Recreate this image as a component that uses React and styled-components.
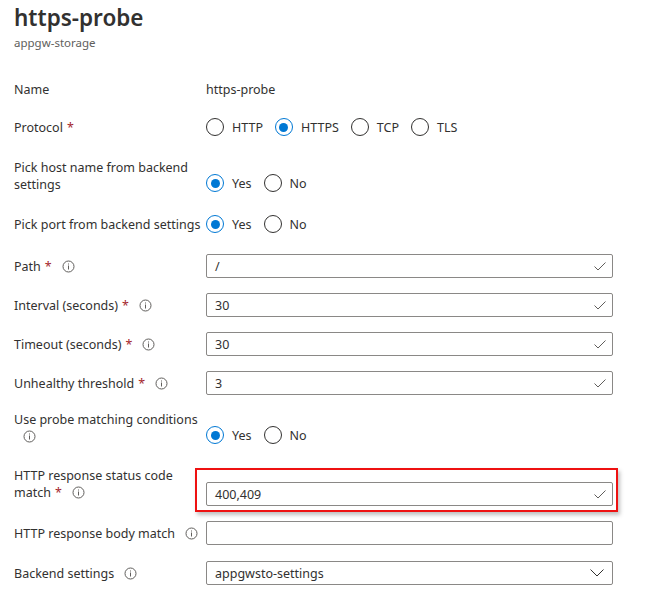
import React from "react";
import styled, { createGlobalStyle } from "styled-components";

const GlobalStyle = createGlobalStyle`
  body {
    margin: 0;
    background: #fff;
    font-family: "Noto Sans", "Open Sans", sans-serif;
    color: #323130;
  }
`;

const Page = styled.div`
  padding: 4px 14px 0 14px;
`;

const Title = styled.h1`
  margin: 0;
  font-size: 22.5px;
  line-height: 28px;
  font-weight: 600;
  color: #323130;
`;

const Subtitle = styled.div`
  margin-top: 3px;
  font-size: 11.5px;
  line-height: 16px;
  color: #605e5c;
`;

const Form = styled.div`
  display: flex;
  flex-direction: column;
  margin-top: 26px;
`;

const Row = styled.div`
  display: grid;
  grid-template-columns: 192px 407px;
  align-items: ${(p) => (p.$end ? "end" : "center")};
  min-height: 24px;
  margin-top: ${(p) => p.$top || 0}px;
`;

const Label = styled.div`
  font-size: 12.5px;
  line-height: 17px;
  white-space: nowrap;
  color: #323130;
  margin-bottom: ${(p) => p.$drop || 0}px;
`;

const Required = styled.span`
  color: #a4262c;
  margin-left: 4px;
`;

const InfoWrap = styled.span`
  display: inline-block;
  margin-left: ${(p) => (p.$wrap ? 9 : 10)}px;
  vertical-align: -2px;
  width: 13px;
  height: 13px;
`;

const Value = styled.div`
  font-size: 12.5px;
  line-height: 17px;
`;

const RadioGroup = styled.div`
  display: flex;
  align-items: center;
  gap: 12px;
  height: 20px;
`;

const RadioItem = styled.label`
  display: flex;
  align-items: center;
  gap: 8px;
  font-size: 12.5px;
  color: #323130;
`;

const Circle = styled.span`
  box-sizing: border-box;
  width: 18px;
  height: 18px;
  border-radius: 50%;
  border: 1px solid ${(p) => (p.$on ? "#0078d4" : "#323130")};
  display: flex;
  align-items: center;
  justify-content: center;
  &::after {
    content: "";
    width: 9px;
    height: 9px;
    border-radius: 50%;
    background: ${(p) => (p.$on ? "#0078d4" : "transparent")};
  }
`;

const Field = styled.div`
  position: relative;
  box-sizing: border-box;
  height: 24px;
  border: 1px solid #8a8886;
  border-radius: 2px;
  display: flex;
  align-items: center;
  justify-content: space-between;
  padding: 0 6px 0 8px;
  font-size: 12.5px;
  color: #323130;

  ${(p) =>
    p.$highlight &&
    `
    &::after {
      content: "";
      position: absolute;
      top: -15px;
      left: -12px;
      right: -6px;
      bottom: -7px;
      border: 2px solid #ee1111;
      box-shadow: 2px 3px 4px rgba(0, 0, 0, 0.25);
      pointer-events: none;
    }
  `}
`;

const Info = ({ wrap }) => (
  <InfoWrap $wrap={wrap}>
    <svg width="13" height="13" viewBox="0 0 13 13">
      <circle cx="6.5" cy="6.5" r="5.5" fill="none" stroke="#605e5c" strokeWidth="1" />
      <rect x="6" y="5.5" width="1" height="4" fill="#605e5c" />
      <rect x="6" y="3.5" width="1" height="1" fill="#605e5c" />
    </svg>
  </InfoWrap>
);

const Check = () => (
  <svg width="12" height="9" viewBox="0 0 12 9">
    <path d="M0.5 4.5 L4 8 L11.5 0.5" fill="none" stroke="#605e5c" strokeWidth="1" />
  </svg>
);

const Chevron = () => (
  <svg width="14" height="8" viewBox="0 0 14 8" style={{ marginRight: 2 }}>
    <path d="M0.5 0.5 L7 7 L13.5 0.5" fill="none" stroke="#323130" strokeWidth="1" />
  </svg>
);

const Radios = ({ options, selected }) => (
  <RadioGroup>
    {options.map((o) => (
      <RadioItem key={o}>
        <Circle $on={o === selected} />
        {o}
      </RadioItem>
    ))}
  </RadioGroup>
);

const App = () => {
  return (
    <>
      <GlobalStyle />
      <Page>
        <Title>https-probe</Title>
        <Subtitle>appgw-storage</Subtitle>
        <Form>
          <Row>
            <Label>Name</Label>
            <Value>https-probe</Value>
          </Row>
          <Row $top={14}>
            <Label>
              Protocol<Required>*</Required>
            </Label>
            <Radios options={["HTTP", "HTTPS", "TCP", "TLS"]} selected="HTTPS" />
          </Row>
          <Row $top={20} $end>
            <Label>
              Pick host name from backend
              <br />
              settings
            </Label>
            <Radios options={["Yes", "No"]} selected="Yes" />
          </Row>
          <Row $top={19}>
            <Label>Pick port from backend settings</Label>
            <Radios options={["Yes", "No"]} selected="Yes" />
          </Row>
          <Row $top={18}>
            <Label>
              Path<Required>*</Required>
              <Info />
            </Label>
            <Field>
              /<Check />
            </Field>
          </Row>
          <Row $top={15}>
            <Label>
              Interval (seconds)<Required>*</Required>
              <Info />
            </Label>
            <Field>
              30<Check />
            </Field>
          </Row>
          <Row $top={15}>
            <Label>
              Timeout (seconds)<Required>*</Required>
              <Info />
            </Label>
            <Field>
              30<Check />
            </Field>
          </Row>
          <Row $top={15}>
            <Label>
              Unhealthy threshold<Required>*</Required>
              <Info />
            </Label>
            <Field>
              3<Check />
            </Field>
          </Row>
          <Row $top={16} $end>
            <Label>
              Use probe matching conditions
              <br />
              <Info wrap />
            </Label>
            <Radios options={["Yes", "No"]} selected="Yes" />
          </Row>
          <Row $top={22} $end>
            <Label $drop={5}>
              HTTP response status code
              <br />
              match<Required>*</Required>
              <Info />
            </Label>
            <Field $highlight>
              400,409<Check />
            </Field>
          </Row>
          <Row $top={15}>
            <Label>
              HTTP response body match
              <Info />
            </Label>
            <Field />
          </Row>
          <Row $top={16}>
            <Label>
              Backend settings
              <Info />
            </Label>
            <Field>
              appgwsto-settings<Chevron />
            </Field>
          </Row>
        </Form>
      </Page>
    </>
  );
};

export default App;
